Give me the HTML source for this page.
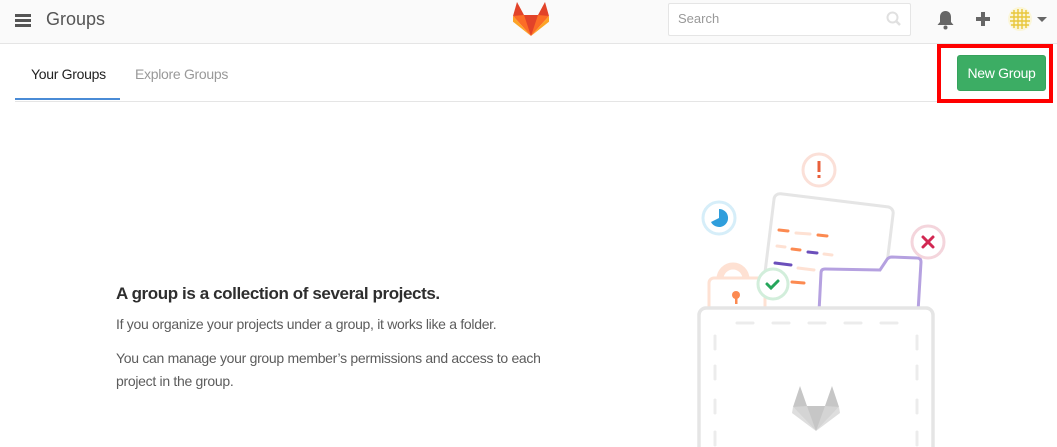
<!DOCTYPE html>
<html><head><meta charset="utf-8"><style>
*{margin:0;padding:0;box-sizing:border-box}
body{width:1057px;height:447px;overflow:hidden;background:#fff;font-family:"Liberation Sans",sans-serif;position:relative}
.hdr{position:absolute;left:0;top:0;width:1057px;height:44px;background:#fafafa;border-bottom:1px solid #e5e5e5}
.abs{position:absolute}
</style></head><body>
<div class="hdr">
  <div class="abs" style="left:15px;top:14px;width:16px;height:3px;background:#555;box-shadow:0 5px 0 #555,0 10px 0 #555"></div>
  <div class="abs" style="left:46px;top:9px;font-size:18px;color:#555">Groups</div>
  <svg class="abs" style="left:513px;top:2px" width="36" height="34" viewBox="0 0 36 34">
    <polygon points="18,34 0,14 4,13 14,13" fill="#fc6d26"/>
    <polygon points="18,34 36,14 32,13 22,13" fill="#fc6d26"/>
    <polygon points="18,34 11,13 25,13" fill="#e24329"/>
    <polygon points="0,14 4,0 11,13" fill="#e24329"/>
    <polygon points="36,14 32,0 25,13" fill="#e24329"/>
    <polygon points="0,14 -1,19 18,34" fill="#fca326"/>
    <polygon points="36,14 37,19 18,34" fill="#fca326"/>
  </svg>
  <div class="abs" style="left:668px;top:3px;width:243px;height:33px;background:#fff;border:1px solid #e5e5e5;border-radius:2px"></div>
  <div class="abs" style="left:678px;top:11px;font-size:13px;color:#999">Search</div>
  <svg class="abs" style="left:886px;top:11px" width="16" height="16"><circle cx="6.5" cy="6.5" r="5" fill="none" stroke="#e0e0e0" stroke-width="2"/><line x1="10" y1="10" x2="14" y2="14" stroke="#e0e0e0" stroke-width="2.5"/></svg>
  <svg class="abs" style="left:936px;top:10px" width="19" height="20" viewBox="0 0 19 20"><path d="M9.5 1c-3.5 0-5.5 2.5-5.5 6v5l-2.5 3h16l-2.5-3V7c0-3.5-2-6-5.5-6z" fill="#666"/><circle cx="9.5" cy="17.5" r="2" fill="#666"/></svg>
  <svg class="abs" style="left:975px;top:11px" width="16" height="16"><rect x="6" y="1" width="4" height="14" fill="#666"/><rect x="1" y="6" width="14" height="4" fill="#666"/></svg>
  <svg class="abs" style="left:1007px;top:6px" width="26" height="26"><circle cx="13" cy="13" r="12" fill="#fbf6d8"/><g stroke="#e8c73a" stroke-width="1.4" fill="none"><path d="M4 7h18M3 11h20M3 15h20M4 19h18M7 4v18M11 3v20M15 3v20M19 4v18"/></g></svg>
  <div class="abs" style="left:1037px;top:17px;width:0;height:0;border-left:5px solid transparent;border-right:5px solid transparent;border-top:5px solid #666"></div>
</div>
<div class="abs" style="left:15px;top:101px;width:1032px;height:1px;background:#e5e5e5"></div>
<div class="abs" style="left:31px;top:66px;font-size:14px;color:#222;letter-spacing:-0.3px">Your Groups</div>
<div class="abs" style="left:135px;top:66px;font-size:14px;color:#999;letter-spacing:-0.3px">Explore Groups</div>
<div class="abs" style="left:15px;top:98px;width:105px;height:2px;background:#4a8bd6"></div>
<div class="abs" style="left:937px;top:44px;width:116px;height:59px;border:4px solid #f00"></div>
<div class="abs" style="left:957px;top:55px;width:89px;height:36px;background:#3cad64;border:1px solid #36a25c;border-radius:3px;color:#fff;font-size:14px;text-align:center;line-height:34px;letter-spacing:-0.3px">New Group</div>

<div class="abs" style="left:116px;top:284px;font-size:17px;font-weight:bold;color:#2e2e2e;letter-spacing:-0.4px">A group is a collection of several projects.</div>
<div class="abs" style="left:116px;top:316px;font-size:14px;color:#5c5c5c;letter-spacing:-0.3px">If you organize your projects under a group, it works like a folder.</div>
<div class="abs" style="left:116px;top:347px;width:440px;font-size:14px;line-height:23px;color:#5c5c5c;letter-spacing:-0.3px">You can manage your group member’s permissions and access to each project in the group.</div>

<svg class="abs" style="left:0;top:0" width="1057" height="447">
  <circle cx="819" cy="170" r="16" fill="#fff" stroke="#fbe0d8" stroke-width="3"/>
  <rect x="817.5" y="161" width="3" height="11" fill="#e8603c"/><rect x="817.5" y="175" width="3" height="3" fill="#e8603c"/>
  <circle cx="719" cy="218" r="16" fill="#fff" stroke="#d6eef9" stroke-width="3"/>
  <path d="M719 218 V209 A9 9 0 1 1 711 222 Z" fill="#2f9edc"/>
  <g transform="rotate(7 828 260)">
    <rect x="767" y="200" width="120" height="120" rx="6" fill="#fff" stroke="#e5e5e5" stroke-width="3"/>
  </g>
  <g stroke-width="3" stroke-linecap="round">
    <line x1="779" y1="230" x2="788" y2="231" stroke="#fc8a51"/><line x1="796" y1="233" x2="810" y2="234" stroke="#fee1d3"/><line x1="818" y1="235" x2="827" y2="236" stroke="#fc8a51"/>
    <line x1="777" y1="246" x2="785" y2="247" stroke="#fee1d3"/><line x1="792" y1="249" x2="800" y2="250" stroke="#fc8a51"/><line x1="808" y1="252" x2="817" y2="253" stroke="#6b4fbb"/><line x1="824" y1="254" x2="832" y2="255" stroke="#fee1d3"/>
    <line x1="775" y1="263" x2="791" y2="265" stroke="#6b4fbb"/><line x1="798" y1="268" x2="814" y2="270" stroke="#fee1d3"/>
    <line x1="792" y1="282" x2="804" y2="283" stroke="#fc8a51"/>
  </g>
  <path d="M720 287 v-8 a13 13 0 0 1 26 0 v8" fill="none" stroke="#fee1d3" stroke-width="7"/>
  <rect x="709" y="278" width="56" height="40" rx="5" fill="#fff" stroke="#fee1d3" stroke-width="3"/>
  <circle cx="736" cy="295" r="4" fill="#fc8a51"/><rect x="735" y="296" width="2.5" height="8" fill="#fc8a51"/>
  <circle cx="773" cy="284" r="15" fill="#fff" stroke="#d2eedb" stroke-width="3"/>
  <path d="M767 284 l4 4 l7 -7" fill="none" stroke="#26a65b" stroke-width="3" stroke-linecap="round"/>
  <path d="M819 312 L821 273 Q821 269 825 269 L880 270 L886 261 Q888 257 892 257 L917 258 Q921 258 921 262 L918 312 Z" fill="#fff" stroke="#b5a1e0" stroke-width="3"/>
  <circle cx="928" cy="242" r="16" fill="#fff" stroke="#f4d5dc" stroke-width="3"/>
  <path d="M923 237 l10 10 M933 237 l-10 10" stroke="#d22852" stroke-width="3" stroke-linecap="round"/>
  <rect x="699" y="308" width="234" height="160" rx="7" fill="#fff" stroke="#e5e5e5" stroke-width="3.5"/>
  <g stroke="#ececec" stroke-width="3" stroke-linecap="round">
    <line x1="737" y1="323" x2="753" y2="323"/><line x1="773" y1="323" x2="789" y2="323"/><line x1="809" y1="323" x2="825" y2="323"/><line x1="845" y1="323" x2="861" y2="323"/><line x1="881" y1="323" x2="897" y2="323"/>
    <line x1="715" y1="336" x2="715" y2="349"/><line x1="715" y1="366" x2="715" y2="379"/><line x1="715" y1="400" x2="715" y2="413"/><line x1="715" y1="432" x2="715" y2="445"/>
    <line x1="917" y1="336" x2="917" y2="349"/><line x1="917" y1="366" x2="917" y2="379"/><line x1="917" y1="400" x2="917" y2="413"/><line x1="917" y1="432" x2="917" y2="445"/>
  </g>
  <g transform="translate(793,386)">
    <polygon points="23,45 0,21 5,20 17,20" fill="#d4d4d4"/>
    <polygon points="23,45 46,21 41,20 29,20" fill="#d4d4d4"/>
    <polygon points="23,45 14,20 32,20" fill="#c6c6c6"/>
    <polygon points="0,21 7,0 14,20" fill="#c6c6c6"/>
    <polygon points="46,21 39,0 32,20" fill="#c6c6c6"/>
    <polygon points="0,21 -1,27 23,45" fill="#dedede"/>
    <polygon points="46,21 47,27 23,45" fill="#dedede"/>
  </g>
</svg>
</body></html>
